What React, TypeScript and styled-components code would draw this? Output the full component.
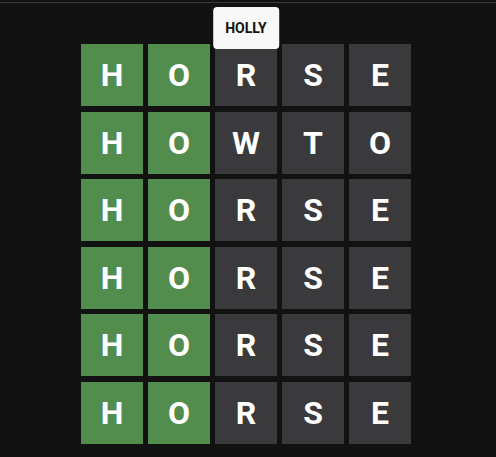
import React from "react";
import styled, { createGlobalStyle } from "styled-components";

const GlobalStyle = createGlobalStyle`
  html, body {
    margin: 0;
    padding: 0;
    background: #121212;
  }
  body {
    font-family: Roboto, "Liberation Sans", Arial, sans-serif;
  }
`;

const Page = styled.div`
  position: relative;
  width: 100%;
  min-height: 457px;
  background: #121212;
`;

const Header = styled.header`
  height: 2px;
  border-bottom: 1px solid #3a3a3c;
`;

const BoardWrap = styled.main`
  display: flex;
  justify-content: center;
  padding: 41px 4px 0 0;
`;

const Board = styled.div`
  display: grid;
  grid-template-columns: repeat(5, 62px);
  grid-auto-rows: 62px;
  column-gap: 5px;
  row-gap: 5.6px;
`;

type TileState = "correct" | "absent";

const Tile = styled.div<{ $state: TileState }>`
  display: flex;
  align-items: center;
  justify-content: center;
  background: ${(p) => (p.$state === "correct" ? "#538d4e" : "#3a3a3c")};
  color: #ffffff;
  font-family: Roboto, "Liberation Sans", Arial, sans-serif;
  font-weight: 700;
  font-size: 32px;
  line-height: 1;
  text-transform: uppercase;
  user-select: none;
`;

const Toast = styled.div`
  position: absolute;
  top: 7px;
  left: 246px;
  transform: translateX(-50%);
  height: 42px;
  padding: 0 12px;
  display: flex;
  align-items: center;
  background: #f8f8f8;
  color: #121212;
  border-radius: 4px;
  font-family: Roboto, "Liberation Sans", Arial, sans-serif;
  font-weight: 700;
  font-size: 14px;
`;

const rows = ["HORSE", "HOWTO", "HORSE", "HORSE", "HORSE", "HORSE"];

export default function App() {
  return (
    <Page>
      <GlobalStyle />
      <Header />
      <BoardWrap>
        <Board>
          {rows.map((word, r) =>
            word.split("").map((ch, c) => (
              <Tile key={`${r}-${c}`} $state={c < 2 ? "correct" : "absent"}>
                {ch}
              </Tile>
            ))
          )}
        </Board>
      </BoardWrap>
      <Toast>HOLLY</Toast>
    </Page>
  );
}
